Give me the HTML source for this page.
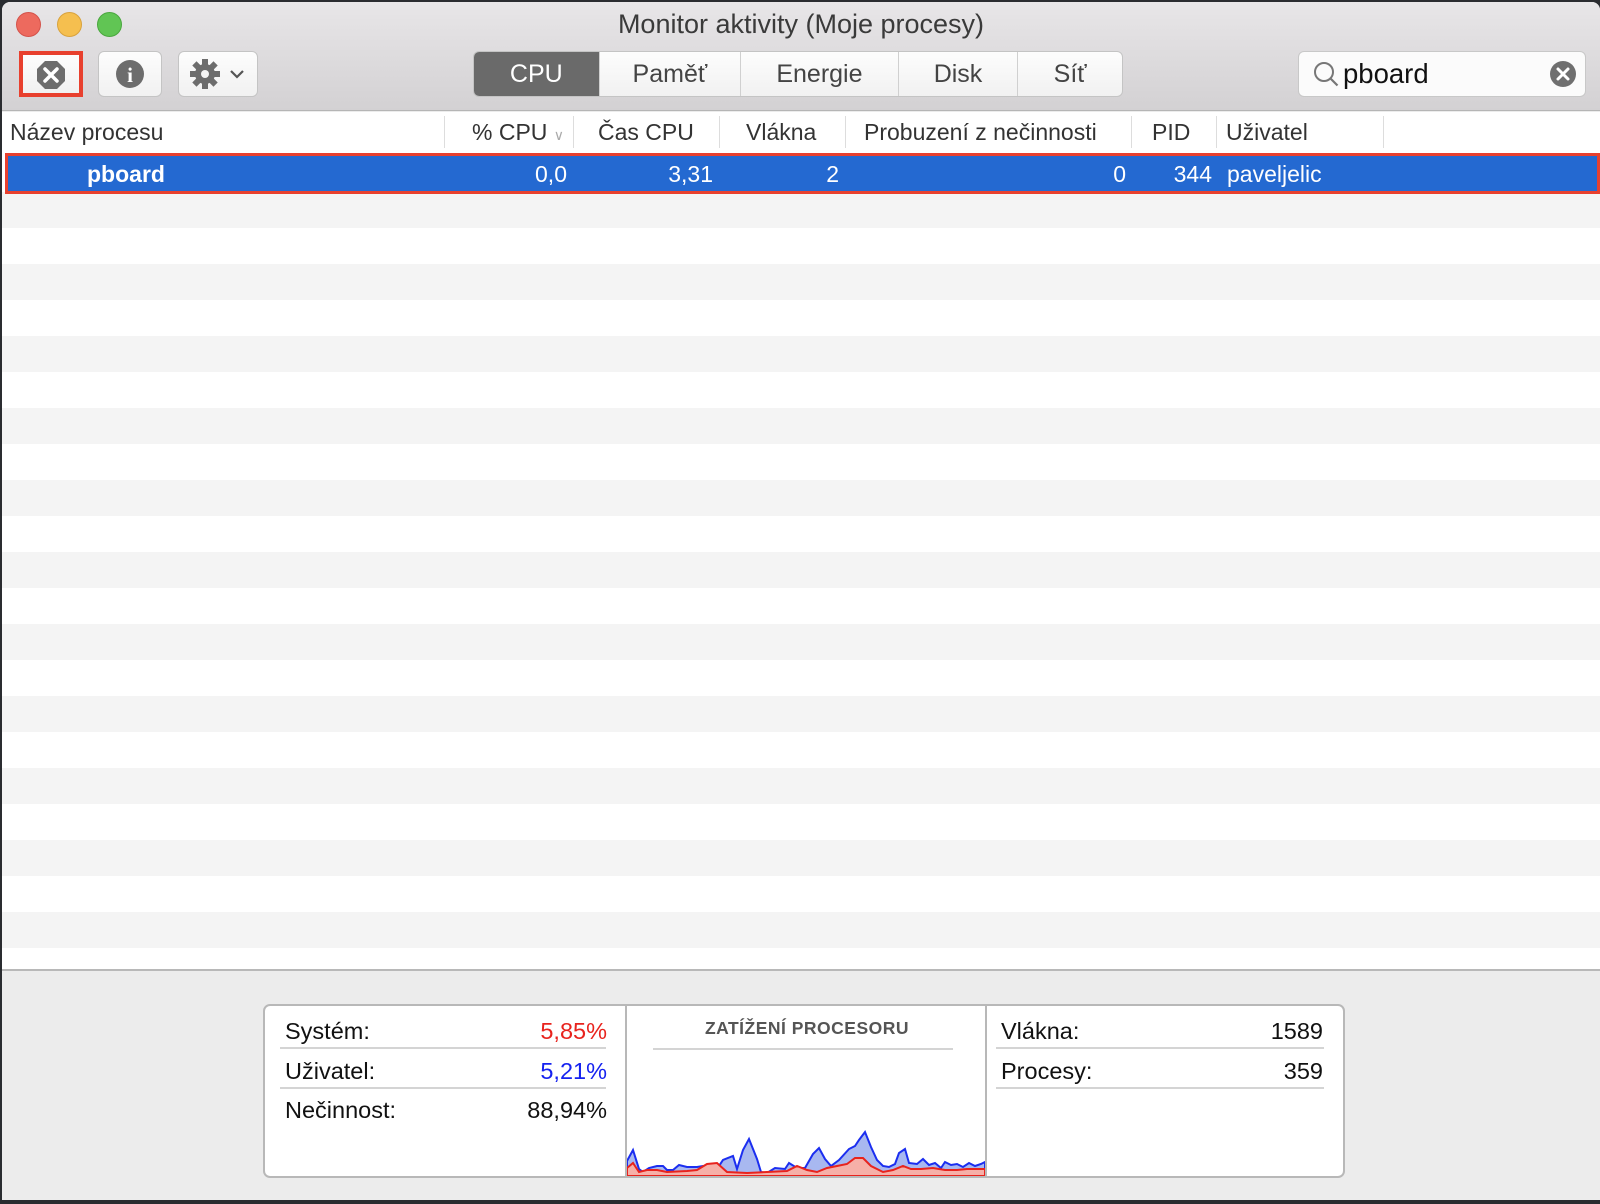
<!DOCTYPE html>
<html><head><meta charset="utf-8"><style>
*{margin:0;padding:0;box-sizing:border-box}
body{width:1600px;height:1204px;background:#2a2c30;position:relative;overflow:hidden;font-family:"Liberation Sans",sans-serif;color:#222}
.win{position:absolute;left:2px;top:2px;width:1598px;height:1198px;background:#ececec;border-radius:8px 8px 0 0;overflow:hidden}
.tb{position:absolute;left:0;top:0;width:100%;height:109px;background:linear-gradient(#e8e6e8,#d3d1d3);border-bottom:1px solid #b5b5b5}
.dot{position:absolute;top:10px;width:25px;height:25px;border-radius:50%}
.title{position:absolute;top:7px;left:0;width:100%;text-align:center;font-size:27px;color:#3a3a3a}
.btn{position:absolute;top:49px;height:46px;background:linear-gradient(#fdfdfd,#f1f1f1);border:1px solid #c4c4c4;border-radius:6px}
.seg{position:absolute;left:471px;top:49px;width:650px;height:46px;border:1px solid #c4c4c4;border-radius:6px;background:linear-gradient(#fdfdfd,#f1f1f1);display:flex;overflow:hidden}
.seg div{border-right:1px solid #d0d0d0;font-size:25px;color:#444;display:flex;align-items:center;justify-content:center}
.search{position:absolute;left:1296px;top:49px;width:288px;height:46px;background:#fbfbfb;border:1px solid #c8c8c8;border-radius:6px}
.hdr{position:absolute;top:110px;left:0;width:100%;height:40px;background:#fff;font-size:23px;color:#333}
.hdr span{position:absolute;top:7px}
.sep{position:absolute;top:4px;width:1px;height:32px;background:#ddd}
.rows{position:absolute;top:150px;left:0;width:100%;height:817px;background:#fff}
.str{position:absolute;left:0;width:100%;height:36px;background:#f4f4f4}
.sel{position:absolute;top:151px;left:3px;width:1595px;height:41px;background:#2469d1;border:3px solid #e8402e;color:#fff;font-size:23px}
.sel span{position:absolute;top:5px}
.r{text-align:right;width:100px}
.bot{position:absolute;top:967px;left:0;width:100%;height:231px;background:#ececec;border-top:2px solid #b8b8b8}
.box{position:absolute;left:261px;top:33px;width:1082px;height:174px;background:#fff;border:2px solid #b8b8b8;border-radius:7px}
.lbl{position:absolute;font-size:23.5px;color:#111}
.hl{position:absolute;height:2px;background:#d4d4d4}
</style></head><body>
<div class="win">
<div class="tb">
<div class="dot" style="left:14px;background:#ed6a5e;border:1px solid #d4524a"></div>
<div class="dot" style="left:55px;background:#f5bf4f;border:1px solid #d9a23c"></div>
<div class="dot" style="left:95px;background:#61c554;border:1px solid #4aa73e"></div>
<div class="title">Monitor aktivity (Moje procesy)</div>
<div class="btn" style="left:17px;width:64px;border:4px solid #e8402e;border-radius:0"><svg width="56" height="38" viewBox="0 0 56 38"><polygon points="22,6 34,6 42,14 42,26 34,34 22,34 14,26 14,14" fill="#6d6d6d"/><path d="M22 14L34 26M34 14L22 26" stroke="#fff" stroke-width="3.5" stroke-linecap="round"/></svg></div>
<div class="btn" style="left:96px;width:64px"><svg width="62" height="44"><circle cx="31" cy="22" r="14" fill="#6d6d6d"/><text x="31" y="30" text-anchor="middle" font-family="Liberation Serif" font-weight="bold" font-size="21" fill="#fff">i</text></svg></div>
<div class="btn" style="left:176px;width:80px"><svg width="78" height="44"><g transform="translate(26,22)" fill="#6d6d6d"><circle r="10"/><g><rect x="-3" y="-15" width="6" height="30"/><rect x="-3" y="-15" width="6" height="30" transform="rotate(45)"/><rect x="-3" y="-15" width="6" height="30" transform="rotate(90)"/><rect x="-3" y="-15" width="6" height="30" transform="rotate(135)"/></g><circle r="4" fill="#f5f5f5"/></g><path d="M52 19l6 6 6-6" stroke="#555" stroke-width="2.2" fill="none"/></svg></div>
<div class="seg">
<div style="width:126px;background:#6a6a6a;color:#fff">CPU</div>
<div style="width:142px">Paměť</div>
<div style="width:158px">Energie</div>
<div style="width:120px">Disk</div>
<div style="width:104px;border-right:none">Síť</div>
</div>
<div class="search"><svg width="40" height="44" style="position:absolute;left:8px;top:0"><circle cx="17" cy="20" r="9" stroke="#777" stroke-width="2" fill="none"/><path d="M23.5 26.5l7 7" stroke="#777" stroke-width="2.2"/></svg><span style="position:absolute;left:44px;top:6px;font-size:27.5px;color:#111">pboard</span><svg width="30" height="30" style="position:absolute;left:249px;top:7px"><circle cx="15" cy="15" r="13" fill="#6f6f6f"/><path d="M10 10l10 10M20 10l-10 10" stroke="#fff" stroke-width="3" stroke-linecap="round"/></svg></div>
</div>
<div class="hdr">
<span style="left:8px">Název procesu</span>
<div class="sep" style="left:442px"></div>
<span style="left:470px">% CPU <span style="position:static;color:#aaa;font-size:14px">&#8744;</span></span>
<div class="sep" style="left:571px"></div>
<span style="left:596px">Čas CPU</span>
<div class="sep" style="left:717px"></div>
<span style="left:744px">Vlákna</span>
<div class="sep" style="left:843px"></div>
<span style="left:862px">Probuzení z nečinnosti</span>
<div class="sep" style="left:1129px"></div>
<span style="left:1150px">PID</span>
<div class="sep" style="left:1214px"></div>
<span style="left:1224px">Uživatel</span>
<div class="sep" style="left:1381px"></div>
</div>
<div class="rows">
<div class="str" style="top:40px"></div><div class="str" style="top:112px"></div><div class="str" style="top:184px"></div><div class="str" style="top:256px"></div><div class="str" style="top:328px"></div><div class="str" style="top:400px"></div><div class="str" style="top:472px"></div><div class="str" style="top:544px"></div><div class="str" style="top:616px"></div><div class="str" style="top:688px"></div><div class="str" style="top:760px"></div>
</div>
<div class="sel">
<span style="left:79px;font-weight:bold">pboard</span>
<span class="r" style="left:459px">0,0</span>
<span class="r" style="left:605px">3,31</span>
<span class="r" style="left:731px">2</span>
<span class="r" style="left:1018px">0</span>
<span class="r" style="left:1104px">344</span>
<span style="left:1219px">paveljelic</span>
</div>
<div class="bot">
<div class="box">
<span class="lbl" style="left:20px;top:12px">Systém:</span><span class="lbl" style="left:252px;width:90px;text-align:right;top:12px;color:#e8231d">5,85%</span>
<div class="hl" style="left:15px;top:41px;width:326px"></div>
<span class="lbl" style="left:20px;top:52px">Uživatel:</span><span class="lbl" style="left:252px;width:90px;text-align:right;top:52px;color:#1522f0">5,21%</span>
<div class="hl" style="left:15px;top:81px;width:326px"></div>
<span class="lbl" style="left:20px;top:91px">Nečinnost:</span><span class="lbl" style="left:222px;width:120px;text-align:right;top:91px">88,94%</span>
<div style="position:absolute;left:360px;top:0;width:2px;height:170px;background:#b8b8b8"></div>
<div style="position:absolute;left:362px;top:12px;width:360px;text-align:center;font-size:17.5px;font-weight:bold;color:#555;letter-spacing:.5px">ZATÍŽENÍ PROCESORU</div>
<div class="hl" style="left:388px;top:42px;width:300px"></div>
<svg style="position:absolute;left:362px;top:120px" width="360" height="50" viewBox="0 0 360 50">
<path d="M0 50L0 35L6 24L12 43L16 46L22 42L30 40L36 40L40 44L46 44L52 39L60 41L70 41L76 40L84 42L90 43L96 34L106 30L110 43L116 24L122 13L130 33L134 46L140 47L148 42L158 43L162 37L170 42L178 42L186 28L192 22L198 33L204 40L212 34L222 23L228 20L232 14L238 6L244 21L250 34L256 40L262 41L268 38L272 27L278 23L282 37L290 38L296 33L302 39L308 37L314 42L318 36L324 39L330 38L336 41L342 37L348 40L354 38L358 36L358 50Z" fill="#a8b8f0" stroke="#1b2ef0" stroke-width="2"/>
<path d="M0 50L0 42L6 37L12 46L20 44L30 44L40 46L60 45L70 44L80 38L90 37L100 46L120 47L140 46L160 45L170 40L180 44L190 46L200 42L210 40L220 38L228 32L236 32L244 40L256 46L266 44L276 40L284 43L294 43L306 42L318 44L330 44L340 43L358 43L358 50Z" fill="#f6b0a8" stroke="#e8231d" stroke-width="2"/>
</svg>
<div style="position:absolute;left:720px;top:0;width:2px;height:170px;background:#b8b8b8"></div>
<span class="lbl" style="left:736px;top:12px">Vlákna:</span><span class="lbl" style="left:960px;width:98px;text-align:right;top:12px">1589</span>
<div class="hl" style="left:731px;top:41px;width:328px"></div>
<span class="lbl" style="left:736px;top:52px">Procesy:</span><span class="lbl" style="left:960px;width:98px;text-align:right;top:52px">359</span>
<div class="hl" style="left:731px;top:81px;width:328px"></div>
</div>
</div>
</div>
</body></html>
